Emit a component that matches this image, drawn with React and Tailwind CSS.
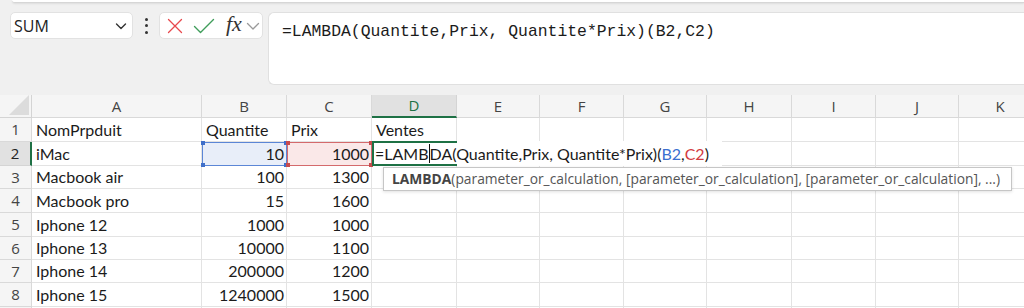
import React from "react";

const cols = [
  { k: "A", w: 170 },
  { k: "B", w: 85 },
  { k: "C", w: 85 },
  { k: "D", w: 85 },
  { k: "E", w: 83 },
  { k: "F", w: 84 },
  { k: "G", w: 83 },
  { k: "H", w: 85 },
  { k: "I", w: 84 },
  { k: "J", w: 83 },
  { k: "K", w: 83 },
];

const rowH = [24, 24, 23, 24, 24, 23, 23, 24];

const data = [
  ["NomPrpduit", "Quantite", "Prix", "Ventes"],
  ["iMac", "10", "1000", ""],
  ["Macbook air", "100", "1300", ""],
  ["Macbook pro", "15", "1600", ""],
  ["Iphone 12", "1000", "1000", ""],
  ["Iphone 13", "10000", "1100", ""],
  ["Iphone 14", "200000", "1200", ""],
  ["Iphone 15", "1240000", "1500", ""],
];

function Corners({ color }) {
  const c = `absolute w-[4px] h-[4px] ${color}`;
  return (
    <>
      <span className={`${c} -left-[2px] -top-[2px]`} />
      <span className={`${c} -right-[2px] -top-[2px]`} />
      <span className={`${c} -left-[2px] -bottom-[2px]`} />
      <span className={`${c} -right-[2px] -bottom-[2px]`} />
    </>
  );
}

export default function App() {
  return (
    <div className="w-[1024px] h-[308px] overflow-hidden bg-[#f0f0f0] relative font-['Lato',sans-serif] text-[#1b1b1b]">
      {/* top ribbon edge */}
      <div className="h-[3px] ml-[12px] bg-white rounded-bl-[6px] border-b border-[#d6d6d6] shadow-[0_1px_2px_rgba(0,0,0,0.08)]" />

      {/* formula bar row */}
      <div className="flex items-start mt-[9px] pl-[10px] h-[73px]">
        <div className="w-[123px] h-[27px] shrink-0 bg-white rounded-[5px] border border-[#e2e2e2] flex items-center justify-between pl-[3px] pr-[4px]">
          <span className="font-['Open_Sans',sans-serif] text-[16px] text-[#222] leading-none">SUM</span>
          <svg width="14" height="14" viewBox="0 0 14 14" fill="none">
            <path d="M2.5 5 L7 9.5 L11.5 5" stroke="#333" strokeWidth="1.4" strokeLinecap="round" strokeLinejoin="round" />
          </svg>
        </div>
        <div className="w-[26px] h-[27px] shrink-0 flex flex-col items-center justify-center gap-[3.5px]">
          <span className="w-[3px] h-[3px] rounded-full bg-[#333]" />
          <span className="w-[3px] h-[3px] rounded-full bg-[#333]" />
          <span className="w-[3px] h-[3px] rounded-full bg-[#333]" />
        </div>
        <div className="w-[104px] h-[27px] shrink-0 bg-white rounded-[5px] border border-[#e2e2e2] flex items-center pl-[7px]">
          <svg width="16" height="16" viewBox="0 0 16 16" fill="none">
            <path d="M1.5 1.5 L14.5 14.5 M14.5 1.5 L1.5 14.5" stroke="#e8484d" strokeWidth="1.3" strokeLinecap="round" />
          </svg>
          <svg width="22" height="16" viewBox="0 0 22 16" fill="none" className="ml-[10px]">
            <path d="M1.5 8.5 L7.5 14.5 L20.5 1.5" stroke="#3f9d5a" strokeWidth="1.4" strokeLinecap="round" strokeLinejoin="round" />
          </svg>
          <span className="ml-[11px] font-['Liberation_Serif',serif] italic text-[22px] leading-none text-[#333] -mt-[3px]">fx</span>
          <svg width="14" height="14" viewBox="0 0 14 14" fill="none" className="ml-[4px]">
            <path d="M1.5 4.5 L7 10 L12.5 4.5" stroke="#9a9a9a" strokeWidth="1.3" strokeLinecap="round" strokeLinejoin="round" />
          </svg>
        </div>
        <div className="ml-[5px] flex-1 h-[73px] bg-white rounded-l-[6px] border border-r-0 border-[#e0e0e0] pl-[13px] pt-[5px]">
          <span className="font-['Liberation_Mono',monospace] text-[16.4px] text-[#1b1b1b] leading-[20px]">
            =LAMBDA(Quantite,Prix, Quantite*Prix)(B2,C2)
          </span>
        </div>
      </div>

      {/* grid */}
      <div className="mt-[10px] relative">
        {/* column header */}
        <div className="flex h-[23px]">
          <div className="w-[32px] shrink-0 h-[23px] border-r border-b border-[#d4d4d4] bg-[#f5f5f5] relative">
            <svg className="absolute right-[2px] bottom-[2px]" width="20" height="20" viewBox="0 0 20 20">
              <path d="M20 0 L20 20 L0 20 Z" fill="#dcdcdc" />
            </svg>
          </div>
          {cols.map((c) => (
            <div
              key={c.k}
              style={{ width: c.w }}
              className={
                c.k === "D"
                  ? "shrink-0 h-[23px] bg-[#e1e1e1] border-r border-[#d4d4d4] border-b-2 border-b-[#1e7145] flex items-center justify-center font-['Open_Sans',sans-serif] text-[15px] text-[#1e7145]"
                  : "shrink-0 h-[23px] bg-[#f5f5f5] border-r border-b border-[#d9d9d9] flex items-center justify-center font-['Open_Sans',sans-serif] text-[15px] text-[#444]"
              }
            >
              {c.k}
            </div>
          ))}
        </div>

        {data.map((row, ri) => (
          <div key={ri} className="flex" style={{ height: rowH[ri] }}>
            <div
              className={
                ri === 1
                  ? "w-[32px] shrink-0 h-full bg-[#e1e1e1] border-b border-[#d4d4d4] border-r-2 border-r-[#1e7145] flex items-center justify-center font-['Open_Sans',sans-serif] text-[15px] leading-none text-[#222]"
                  : "w-[32px] shrink-0 h-full bg-[#f5f5f5] border-r border-b border-[#d9d9d9] flex items-center justify-center font-['Open_Sans',sans-serif] text-[15px] leading-none text-[#444]"
              }
            >
              {ri + 1}
            </div>
            {cols.map((c, ci) => {
              const val = row[ci] || "";
              const num = ri > 0 && (ci === 1 || ci === 2);
              let extra = "bg-white border-r border-b border-[#e3e3e3]";
              let corners = null;
              if (ri === 1 && ci === 1) {
                extra = "bg-[#e8eef9] border border-[#5b86d6] relative";
                corners = <Corners color="bg-[#3f6fc9]" />;
              } else if (ri === 1 && ci === 2) {
                extra = "bg-[#fae8e8] border border-[#d46a6c] relative";
                corners = <Corners color="bg-[#c84b4e]" />;
              }
              return (
                <div
                  key={c.k}
                  style={{ width: c.w }}
                  className={`shrink-0 h-full flex items-center text-[16px] leading-none ${num ? "justify-end pr-[2px]" : "pl-[4px]"} ${extra}`}
                >
                  {corners}
                  {val}
                </div>
              );
            })}
          </div>
        ))}
        {/* partial row 9 */}
        <div className="flex h-[4px]">
          <div className="w-[32px] shrink-0 h-full bg-[#f5f5f5] border-r border-[#d9d9d9]" />
          {cols.map((c) => (
            <div key={c.k} style={{ width: c.w }} className="shrink-0 h-full bg-white border-r border-[#e3e3e3]" />
          ))}
        </div>

        {/* edit overlay on D2 */}
        <div className="absolute left-[372px] top-[46px] h-[25px] w-[350px] bg-white flex items-center pl-[3px] text-[16px] leading-none whitespace-nowrap">
          <span>=LAMB</span>
          <span className="w-px h-[19px] bg-[#111]" />
          <span>DA(Quantite,Prix, Quantite*Prix)(</span>
          <span className="text-[#3a6fd0]">B2</span>
          <span>,</span>
          <span className="text-[#d23b3f]">C2</span>
          <span>)</span>
        </div>
        <div className="absolute left-[372px] top-[46px] h-[25px] w-[85px] border-t-2 border-b-2 border-l-2 border-[#1e7145] pointer-events-none" />

        {/* tooltip */}
        <div className="absolute left-[383px] top-[72px] w-[629px] h-[24px] bg-white border border-[#c6c6c6] shadow-[0_1px_3px_rgba(0,0,0,0.12)] flex items-center pl-[8px] font-['Open_Sans',sans-serif] text-[13.8px] text-[#555] whitespace-nowrap">
          <span className="font-bold text-[#444]">LAMBDA</span>
          <span>(parameter_or_calculation, [parameter_or_calculation], [parameter_or_calculation], ...)</span>
        </div>
      </div>
    </div>
  );
}
